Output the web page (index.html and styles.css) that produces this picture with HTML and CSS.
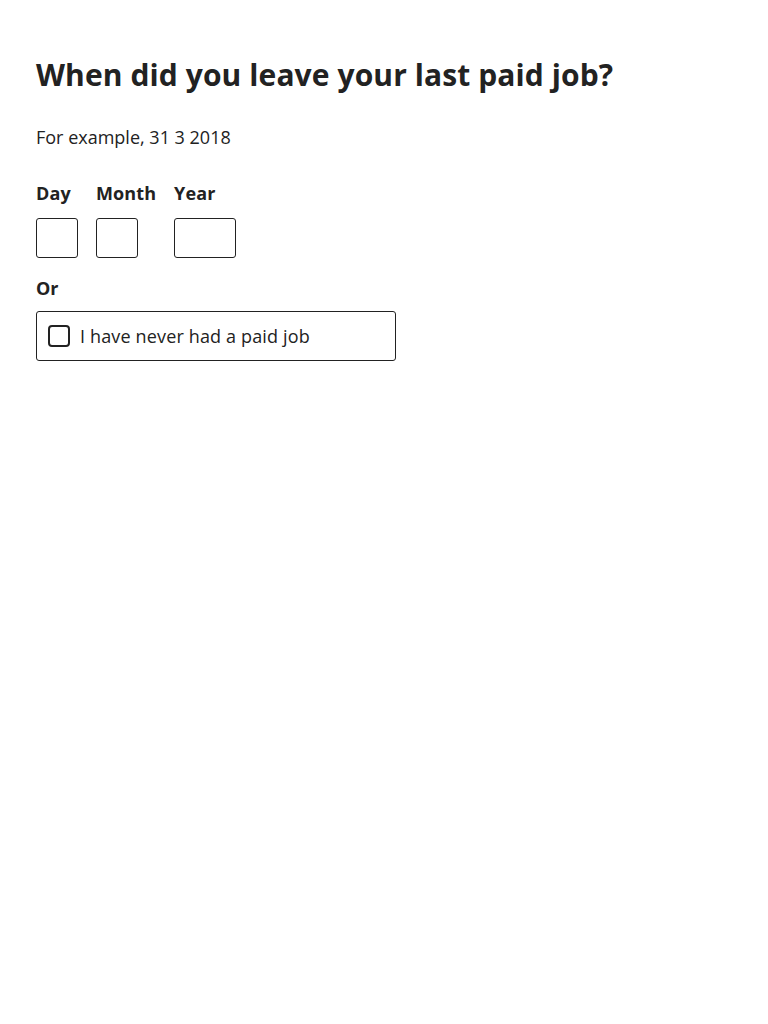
FILE: index.html
```html
<!DOCTYPE html>
<html lang="en">
<head>
<meta charset="utf-8">
<title>When did you leave your last paid job?</title>
<link rel="stylesheet" href="styles.css">
</head>
<body>
<main class="page">
  <h1 class="title">When did you leave your last paid job?</h1>
  <p class="hint">For example, 31 3 2018</p>
  <div class="date">
    <div class="field">
      <label class="label" for="day">Day</label>
      <input class="input input-2" id="day" type="text">
    </div>
    <div class="field">
      <label class="label" for="month">Month</label>
      <input class="input input-2" id="month" type="text">
    </div>
    <div class="field">
      <label class="label" for="year">Year</label>
      <input class="input input-4" id="year" type="text">
    </div>
  </div>
  <p class="or">Or</p>
  <label class="option">
    <span class="box"></span>
    <span class="option-text">I have never had a paid job</span>
  </label>
</main>
</body>
</html>
```
FILE: styles.css
```css
* { box-sizing: border-box; }
html, body { margin: 0; padding: 0; background: #fff; }
body {
  font-family: "Open Sans", "Liberation Sans", sans-serif;
  color: #222222;
}
.page {
  padding: 54px 36px 36px;
}
.title {
  margin: 0;
  font-size: 30px;
  line-height: 42px;
  font-weight: 700;
  letter-spacing: 0.1px;
}
.hint {
  margin: 28px 0 0;
  font-size: 18px;
  line-height: 26px;
}
.date {
  display: flex;
  gap: 18px;
  margin-top: 30px;
}
.field {
  display: flex;
  flex-direction: column;
}
.label {
  font-size: 18px;
  line-height: 26px;
  font-weight: 700;
  margin-bottom: 12px;
  letter-spacing: 0.1px;
}
.input {
  height: 40px;
  border: 1px solid #222222;
  border-radius: 3px;
  background: #fff;
  font: inherit;
  padding: 0 8px;
}
.input-2 { width: 42px; }
.input-4 { width: 62px; }
.or {
  margin: 17px 0 0;
  font-size: 18px;
  line-height: 26px;
  font-weight: 700;
}
.option {
  margin-top: 10px;
  width: 360px;
  height: 50px;
  border: 1px solid #222222;
  border-radius: 3px;
  display: flex;
  align-items: center;
  padding-left: 11px;
  gap: 10px;
}
.box {
  width: 22px;
  height: 22px;
  border: 2px solid #222222;
  border-radius: 4px;
  flex: none;
}
.option-text {
  font-size: 18px;
  line-height: 26px;
  letter-spacing: 0.15px;
}
```
